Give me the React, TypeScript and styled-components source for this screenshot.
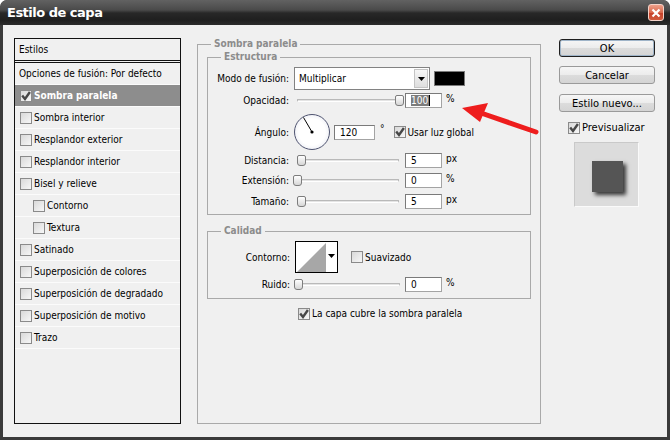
import React from "react";
import styled, { createGlobalStyle } from "styled-components";

const GlobalStyle = createGlobalStyle`
  html, body { margin: 0; padding: 0; background: #fff; }
  body {
    font-family: "DejaVu Sans Condensed", "DejaVu Sans", sans-serif;
    font-stretch: condensed;
    font-size: 10px;
    color: #000;
  }
`;

type StyleItem = { label: string; checked?: boolean; indent?: boolean; active?: boolean; noBox?: boolean };

const styles: StyleItem[] = [
  { label: "Opciones de fusión: Por defecto", noBox: true },
  { label: "Sombra paralela", checked: true, active: true },
  { label: "Sombra interior" },
  { label: "Resplandor exterior" },
  { label: "Resplandor interior" },
  { label: "Bisel y relieve" },
  { label: "Contorno", indent: true },
  { label: "Textura", indent: true },
  { label: "Satinado" },
  { label: "Superposición de colores" },
  { label: "Superposición de degradado" },
  { label: "Superposición de motivo" },
  { label: "Trazo" },
];

const Check = ({ checked }: { checked?: boolean }) => (
  <Box>
    {checked && (
      <svg width="10" height="10" viewBox="0 0 10 10">
        <path d="M1.2 4.4 L4 7.9 L8.9 1" fill="none" stroke="#474747" strokeWidth="2.4" />
      </svg>
    )}
  </Box>
);

const Slider = ({ pct }: { pct: number }) => (
  <SliderWrap>
    <Track />
    <Thumb style={{ left: 4 + pct * 102 - 4.5 }} />
  </SliderWrap>
);

const App = () => {
  return (
    <>
      <GlobalStyle />
      <Window>
        <TitleBar>
          <Title>Estilo de capa</Title>
          <CloseBtn>
            <svg width="10" height="10" viewBox="0 0 10 10">
              <path d="M1.5 1.5 L8.5 8.5 M8.5 1.5 L1.5 8.5" stroke="#fff" strokeWidth="2.2" />
            </svg>
          </CloseBtn>
        </TitleBar>
        <Body>
          <ListPanel>
            <ListHeader>Estilos</ListHeader>
            {styles.map((s) => (
              <ListItem key={s.label} $active={s.active} $indent={s.indent} $noBox={s.noBox}>
                {!s.noBox && <Check checked={s.checked} />}
                <span>{s.label}</span>
              </ListItem>
            ))}
          </ListPanel>

          <MainGroup>
            <Legend $ml={4}>Sombra paralela</Legend>
            <Group $pad="4px 0 5px">
              <Legend $ml={13}>Estructura</Legend>
              <Row $h={23}>
                <Label>Modo de fusión:</Label>
                <Select>
                  <span>Multiplicar</span>
                  <SelectArrow>
                    <svg width="7" height="4" viewBox="0 0 7 4">
                      <path d="M0 0 H7 L3.5 4 Z" fill="#000" />
                    </svg>
                  </SelectArrow>
                </Select>
                <Swatch />
              </Row>
              <Row $mt={3}>
                <Label>Opacidad:</Label>
                <Slider pct={1} />
                <Input>
                  <Selected>100</Selected>
                </Input>
                <Unit>%</Unit>
              </Row>
              <Row $mt={6} $h={36}>
                <Label>Ángulo:</Label>
                <Dial>
                  <svg width="36" height="36" viewBox="0 0 36 36">
                    <line x1="18" y1="18" x2="9.5" y2="3.5" stroke="#000" strokeWidth="1" />
                    <circle cx="18" cy="18" r="1.6" fill="#000" />
                  </svg>
                </Dial>
                <Input $w={41} $ml={4}>120</Input>
                <Unit $ml={5} $up={7}>°</Unit>
                <CheckLabel $ml={9}>
                  <Check checked />
                  <span>Usar luz global</span>
                </CheckLabel>
              </Row>
              <Row $mt={3}>
                <Label>Distancia:</Label>
                <Slider pct={0.045} />
                <Input>5</Input>
                <Unit>px</Unit>
              </Row>
              <Row $mt={5}>
                <Label>Extensión:</Label>
                <Slider pct={0} />
                <Input>0</Input>
                <Unit>%</Unit>
              </Row>
              <Row $mt={6}>
                <Label>Tamaño:</Label>
                <Slider pct={0.045} />
                <Input>5</Input>
                <Unit>px</Unit>
              </Row>
            </Group>

            <Group $pad="4px 0 6px" $mt={10}>
              <Legend $ml={13}>Calidad</Legend>
              <Row $h={32}>
                <Label $w={86}>Contorno:</Label>
                <Contour>
                  <ContourThumb>
                    <svg width="30" height="30" viewBox="0 0 30 30">
                      <path d="M1 30 L30 1 V30 Z" fill="#a7a7a7" />
                    </svg>
                  </ContourThumb>
                  <ContourArrow>
                    <svg width="7" height="4" viewBox="0 0 7 4">
                      <path d="M0 0 H7 L3.5 4 Z" fill="#000" />
                    </svg>
                  </ContourArrow>
                </Contour>
                <CheckLabel $ml={13}>
                  <Check />
                  <span>Suavizado</span>
                </CheckLabel>
              </Row>
              <Row $mt={4}>
                <Label $w={86}>Ruido:</Label>
                <Slider pct={0} />
                <Input $ml={1}>0</Input>
                <Unit>%</Unit>
              </Row>
            </Group>

            <FooterCheck>
              <CheckLabel>
                <Check checked />
                <span>La capa cubre la sombra paralela</span>
              </CheckLabel>
            </FooterCheck>
          </MainGroup>

          <Side>
            <Button $default>OK</Button>
            <Button $mt={9}>Cancelar</Button>
            <Button $mt={10}>Estilo nuevo...</Button>
            <PreviewCheck>
              <Check checked />
              <span>Previsualizar</span>
            </PreviewCheck>
            <Preview>
              <PreviewSquare />
            </Preview>
          </Side>
        </Body>

        <Arrow width="90" height="40" viewBox="0 0 90 40">
          <line x1="26" y1="15" x2="81" y2="34" stroke="#ee1d1d" strokeWidth="5" strokeLinecap="round" />
          <path d="M7 10 L33 5 L25 24 Z" fill="#ee1d1d" />
        </Arrow>
      </Window>
    </>
  );
};

export default App;

const Window = styled.div`
  position: relative;
  width: 670px;
  height: 440px;
  box-sizing: border-box;
  display: flex;
  flex-direction: column;
  background: #3a3a3a;
  border-radius: 7px 7px 0 0;
  padding: 0 3px 3px;
  overflow: hidden;
`;

const TitleBar = styled.div`
  height: 25px;
  margin: 0 -3px;
  padding: 0 6px 0 7px;
  display: flex;
  align-items: center;
  justify-content: space-between;
  background: linear-gradient(#626262 0, #4a4a4a 10px, #282828 13px, #1f1f1f 20px, #2c2c2c 25px);
  border-radius: 7px 7px 0 0;
`;

const Title = styled.span`
  font-family: "DejaVu Sans", sans-serif;
  font-stretch: normal;
  font-weight: bold;
  font-size: 13px;
  color: #fff;
  letter-spacing: -0.5px;
`;

const CloseBtn = styled.div`
  width: 16px;
  height: 17px;
  box-sizing: border-box;
  display: flex;
  align-items: center;
  justify-content: center;
  border: 1px solid #f4d2c8;
  border-radius: 3px;
  background: linear-gradient(#eea08a, #d9684c 50%, #c5412a 55%, #d25a3c);
`;

const Body = styled.div`
  flex: 1;
  display: flex;
  align-items: stretch;
  background: #f0f0f0;
  padding: 13px 12px 13px 11px;
`;

const ListPanel = styled.div`
  width: 167px;
  flex: none;
  box-sizing: border-box;
  border: 1px solid #111;
  background: #f0f0f0;
`;

const ListHeader = styled.div`
  height: 21px;
  line-height: 21px;
  padding-left: 4px;
  border-bottom: 3px double #111;
`;

const ListItem = styled.div<{ $active?: boolean; $indent?: boolean; $noBox?: boolean }>`
  height: 21px;
  display: flex;
  align-items: center;
  gap: 2px;
  padding-left: ${(p) => (p.$noBox ? 4 : p.$indent ? 18 : 5)}px;
  border-bottom: 1px solid #fbfbfb;
  background: ${(p) => (p.$active ? "#8d8d8d" : "transparent")};
  color: ${(p) => (p.$active ? "#fff" : "#000")};
  font-weight: ${(p) => (p.$active ? "bold" : "normal")};
  white-space: nowrap;
`;

const Box = styled.span`
  width: 12px;
  height: 12px;
  flex: none;
  box-sizing: border-box;
  display: inline-flex;
  align-items: center;
  justify-content: center;
  border: 1px solid #8a8a8a;
  background: linear-gradient(135deg, #d9d9d9, #f7f7f7);
`;

const MainGroup = styled.fieldset`
  flex: 0 0 344px;
  box-sizing: border-box;
  margin: 0 0 0 16px;
  padding: 0 9px;
  border: 1px solid #a9a9a9;
  min-width: 0;
`;

const Group = styled.fieldset<{ $pad: string; $mt?: number }>`
  margin: ${(p) => p.$mt ?? 1}px 0 0;
  padding: ${(p) => p.$pad};
  border: 1px solid #a9a9a9;
  min-width: 0;
`;

const Legend = styled.legend<{ $ml: number }>`
  margin-left: ${(p) => p.$ml}px;
  padding: 0 3px;
  font-weight: bold;
  line-height: 12px;
  color: #8c8c8c;
`;

const Row = styled.div<{ $mt?: number; $h?: number }>`
  display: flex;
  align-items: center;
  margin-top: ${(p) => p.$mt ?? 0}px;
  height: ${(p) => p.$h ?? 15}px;
`;

const Label = styled.span<{ $w?: number }>`
  width: ${(p) => p.$w ?? 85}px;
  box-sizing: border-box;
  flex: none;
  padding-right: 4px;
  text-align: right;
  white-space: nowrap;
`;

const Select = styled.div`
  margin-left: 1px;
  width: 136px;
  height: 23px;
  box-sizing: border-box;
  display: flex;
  align-items: center;
  justify-content: space-between;
  padding: 0 1px 0 4px;
  border: 1px solid #828282;
  background: #fff;
`;

const SelectArrow = styled.span`
  width: 14px;
  height: 19px;
  display: flex;
  align-items: center;
  justify-content: center;
  background: linear-gradient(#f6f6f6, #dedede);
  border: 1px solid #c4c4c4;
  box-sizing: border-box;
`;

const Swatch = styled.span`
  margin-left: 4px;
  width: 31px;
  height: 15px;
  box-sizing: border-box;
  background: #000;
  border: 1px solid #7a7a7a;
`;

const SliderWrap = styled.div`
  position: relative;
  width: 110px;
  height: 15px;
  flex: none;
`;

const Track = styled.div`
  position: absolute;
  left: 4px;
  right: 4px;
  top: 6px;
  height: 3px;
  box-sizing: border-box;
  border: 1px solid #b9b9b9;
  border-bottom-color: #fff;
  background: #e4e4e4;
  border-radius: 1px;
`;

const Thumb = styled.div`
  position: absolute;
  top: 2px;
  width: 9px;
  height: 11px;
  box-sizing: border-box;
  border: 1px solid #7d7d7d;
  border-radius: 2px 2px 3px 3px;
  background: linear-gradient(#ffffff, #d6d6d6);
`;

const Input = styled.div<{ $w?: number; $ml?: number }>`
  margin-left: ${(p) => p.$ml ?? 2}px;
  width: ${(p) => p.$w ?? 37}px;
  height: 15px;
  box-sizing: border-box;
  flex: none;
  padding-left: 5px;
  line-height: 13px;
  background: #fff;
  border: 1px solid #a3a3a3;
  border-top-color: #7a7a7a;
  border-left-color: #7a7a7a;
`;

const Selected = styled.span`
  background: #7c7c7c;
  color: #fff;
  padding-right: 1px;
  border-right: 1px solid #000;
`;

const Unit = styled.span<{ $ml?: number; $up?: number }>`
  margin-left: ${(p) => p.$ml ?? 4}px;
  margin-bottom: ${(p) => p.$up ?? 3}px;
  line-height: 12px;
`;

const Dial = styled.div`
  width: 36px;
  height: 36px;
  flex: none;
  box-sizing: border-box;
  border-radius: 50%;
  border: 1px solid #4f5470;
  background: radial-gradient(circle, #ffffff 55%, #e8eaf2 85%, #c9cde0 100%);
  display: flex;
  align-items: center;
  justify-content: center;
  margin-left: 1px;
  svg { margin: -1px; }
`;

const CheckLabel = styled.label<{ $ml?: number }>`
  margin-left: ${(p) => p.$ml ?? 0}px;
  display: flex;
  align-items: center;
  gap: 2px;
  white-space: nowrap;
`;

const Contour = styled.div`
  display: flex;
  margin-left: 1px;
  height: 32px;
  box-sizing: border-box;
  border: 1px solid #000;
  background: #fff;
`;

const ContourThumb = styled.div`
  width: 30px;
  height: 30px;
`;

const ContourArrow = styled.div`
  width: 11px;
  display: flex;
  justify-content: center;
  padding-top: 12px;
  box-sizing: border-box;
`;

const FooterCheck = styled.div`
  margin-top: 8px;
  padding-left: 91px;
  height: 13px;
  display: flex;
`;

const Side = styled.div`
  margin-left: 18px;
  width: 96px;
  flex: none;
  display: flex;
  flex-direction: column;
`;

const Button = styled.div<{ $default?: boolean; $mt?: number }>`
  margin-top: ${(p) => p.$mt ?? 1}px;
  height: 18px;
  box-sizing: border-box;
  display: flex;
  align-items: center;
  justify-content: center;
  font-size: 11px;
  border: 1px solid ${(p) => (p.$default ? "#1e1e1e" : "#9a9a9a")};
  box-shadow: ${(p) => (p.$default ? "inset 0 0 0 1px #9fb4c8" : "none")};
  border-radius: 3px;
  background: linear-gradient(#f6f6f6 0, #ececec 50%, #dcdcdc 51%, #d4d4d4 100%);
`;

const PreviewCheck = styled.label`
  margin: 9px 0 0 9px;
  display: flex;
  align-items: center;
  gap: 2px;
  font-size: 11px;
`;

const Preview = styled.div`
  margin: 8px 0 0 15px;
  width: 65px;
  height: 65px;
  box-sizing: border-box;
  padding: 18px 0 0 17px;
  background: #dcdcdc;
  border: 1px solid #c9c9c9;
  border-right-color: #fafafa;
  border-bottom-color: #fafafa;
`;

const PreviewSquare = styled.div`
  width: 31px;
  height: 31px;
  background: #555;
  box-shadow: 3px 3px 4px rgba(0, 0, 0, 0.75);
`;

const Arrow = styled.svg`
  position: absolute;
  left: 455px;
  top: 98px;
  pointer-events: none;
`;
